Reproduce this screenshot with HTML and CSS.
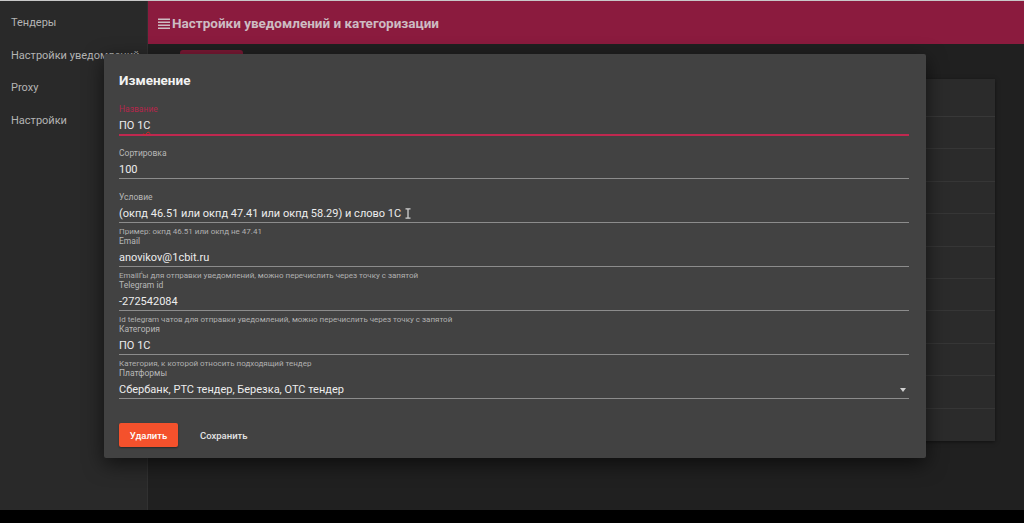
FILE: index.html
```html
<!DOCTYPE html>
<html lang="ru">
<head>
<meta charset="utf-8">
<title>Настройки уведомлений и категоризации</title>
<link rel="stylesheet" href="styles.css">
</head>
<body>
<div class="screen">
  <div class="topline"></div>
  <div class="app">
    <nav class="sidebar">
      <div class="nav-item">Тендеры</div>
      <div class="nav-item">Настройки уведомлений</div>
      <div class="nav-item">Proxy</div>
      <div class="nav-item">Настройки</div>
    </nav>
    <main class="main">
      <header class="header">
        <svg class="menu-icon" width="12" height="11" viewBox="0 0 12 11"><rect x="0" y="0.5" width="12" height="1.5" fill="currentColor"/><rect x="0" y="3.5" width="12" height="1.5" fill="currentColor"/><rect x="0" y="6.5" width="12" height="1.5" fill="currentColor"/><rect x="0" y="9.5" width="12" height="1.5" fill="currentColor"/></svg>
        <span class="header-title">Настройки уведомлений и категоризации</span>
      </header>
      <div class="content">
        <div class="add-btn"></div>
        <div class="card">
          <div class="card-head"></div>
          <div class="card-row"></div><div class="card-row"></div><div class="card-row"></div>
          <div class="card-row"></div><div class="card-row"></div><div class="card-row"></div>
          <div class="card-row"></div><div class="card-row"></div><div class="card-row"></div>
          <div class="card-row last"></div>
        </div>
      </div>
    </main>
  </div>
  <div class="bottom-strip"></div>

  <div class="dialog">
    <div class="dialog-title">Изменение</div>
    <div class="field focused">
      <div class="label">Название</div>
      <div class="input">ПО 1<span class="spell">С</span></div>
    </div>
    <div class="field">
      <div class="label">Сортировка</div>
      <div class="input">100</div>
    </div>
    <div class="field with-hint">
      <div class="label">Условие</div>
      <div class="input">(окпд 46.51 или окпд 47.41 или окпд 58.29) и слово 1С <svg class="ibeam" width="6" height="11" viewBox="0 0 6 11"><path d="M0.5 0.8h5M0.5 10.2h5M3 0.8v9.4" stroke="#cfcfcf" stroke-width="1.3" fill="none"/></svg></div>
      <div class="hint">Пример: окпд 46.51 или окпд не 47.41</div>
    </div>
    <div class="field with-hint">
      <div class="label">Email</div>
      <div class="input">anovikov@1cbit.ru</div>
      <div class="hint">EmailЃы для отправки уведомлений, можно перечислить через точку с запятой</div>
    </div>
    <div class="field with-hint">
      <div class="label">Telegram id</div>
      <div class="input">-272542084</div>
      <div class="hint">Id telegram чатов для отправки уведомлений, можно перечислить через точку с запятой</div>
    </div>
    <div class="field with-hint">
      <div class="label">Категория</div>
      <div class="input">ПО 1С</div>
      <div class="hint">Категория, к которой относить подходящий тендер</div>
    </div>
    <div class="field">
      <div class="label">Платформы</div>
      <div class="input select"><span>Сбербанк, РТС тендер, Березка, ОТС тендер</span><span class="arrow"></span></div>
    </div>
    <div class="actions">
      <button class="btn btn-danger">Удалить</button>
      <button class="btn btn-flat">Сохранить</button>
    </div>
  </div>
</div>
</body>
</html>
```
FILE: styles.css
```css
* { box-sizing: border-box; }
html, body { margin: 0; padding: 0; }
body {
  background: #000;
  font-family: Roboto, "Noto Sans", "DejaVu Sans", sans-serif;
  width: 1024px;
  height: 523px;
  overflow: hidden;
}
.screen { position: relative; width: 1024px; height: 523px; }
.topline { height: 1px; background: #c8c8c8; }
.app { display: flex; height: 509px; }
.sidebar {
  width: 148px;
  background: #292929;
  border-right: 1px solid #313131;
  padding-top: 6px;
}
.nav-item {
  height: 32.5px;
  line-height: 32px;
  padding-left: 11px;
  font-size: 11px;
  color: #b4b4b4;
  white-space: nowrap;
  overflow: hidden;
}
.main { flex: 1; background: #202020; display: flex; flex-direction: column; }
.header {
  height: 43px;
  background: #8b1b3e;
  display: flex;
  align-items: center;
  padding-left: 10px;
  color: #cdbcc2;
}
.menu-icon { margin-right: 2px; margin-top: 1px; }
.header-title { font-size: 13.5px; font-weight: 700; }
.content { padding: 6px 29px 0 32px; }
.add-btn { width: 63px; height: 28px; background: #7a1935; border-radius: 3px; }
.card {
  margin-top: 1px;
  height: 362px;
  background: #2b2b2b;
  box-shadow: 0 1px 4px rgba(0,0,0,0.5);
}
.card-head { height: 38px; border-bottom: 1px solid #383838; }
.card-row { height: 32.4px; border-bottom: 1px solid #363636; }
.card-row.last { border-bottom: none; }
.bottom-strip { height: 14px; background: #000; }

.dialog {
  position: absolute;
  left: 104px;
  top: 54px;
  width: 822px;
  height: 404px;
  background: #424242;
  border-radius: 2px;
  box-shadow: 0 6px 20px rgba(0,0,0,0.6);
  padding: 16px 17px 0 15px;
  color: #ececec;
}
.dialog-title {
  font-size: 13.5px;
  font-weight: 700;
  line-height: 20px;
  margin-bottom: 14px;
  color: #f2f2f2;
}
.field { margin-bottom: 13px; }
.field.with-hint { margin-bottom: 0; }
.label {
  font-size: 8.5px;
  line-height: 11px;
  color: #b8b8b8;
}
.input {
  height: 20px;
  padding-top: 2px;
  font-size: 11px;
  color: #ededed;
  border-bottom: 1px solid #8c8c8c;
  white-space: nowrap;
  display: flex;
  align-items: center;
}
.field.focused .label { color: #b4274b; }
.field.focused .input { border-bottom: 2px solid #c0284f; height: 21px; }
.field.focused { margin-bottom: 12px; }
.spell { text-decoration: underline wavy #d22; text-underline-offset: 2px; text-decoration-thickness: 1px; }
.ibeam { margin-left: 4px; }
.hint {
  margin-top: 4px;
  height: 9px;
  font-size: 8px;
  line-height: 9px;
  color: #b0b0b0;
  white-space: nowrap;
}
.select { justify-content: space-between; }
.arrow {
  width: 0; height: 0;
  border-left: 3.5px solid transparent;
  border-right: 3.5px solid transparent;
  border-top: 4px solid #d0d0d0;
  margin-right: 3px;
}
.actions { display: flex; align-items: center; margin-top: 24px; gap: 14px; }
.btn {
  font-family: Roboto, "Noto Sans", sans-serif;
  font-size: 9.5px;
  font-weight: 500;
  height: 24px;
  border: none;
  border-radius: 2px;
  padding: 0 8px;
  cursor: pointer;
}
.btn-danger { background: #f4512c; color: #fff; width: 59px; box-shadow: 0 1px 2px rgba(0,0,0,0.4); }
.btn-flat { background: transparent; color: #e4e4e4; }
```
